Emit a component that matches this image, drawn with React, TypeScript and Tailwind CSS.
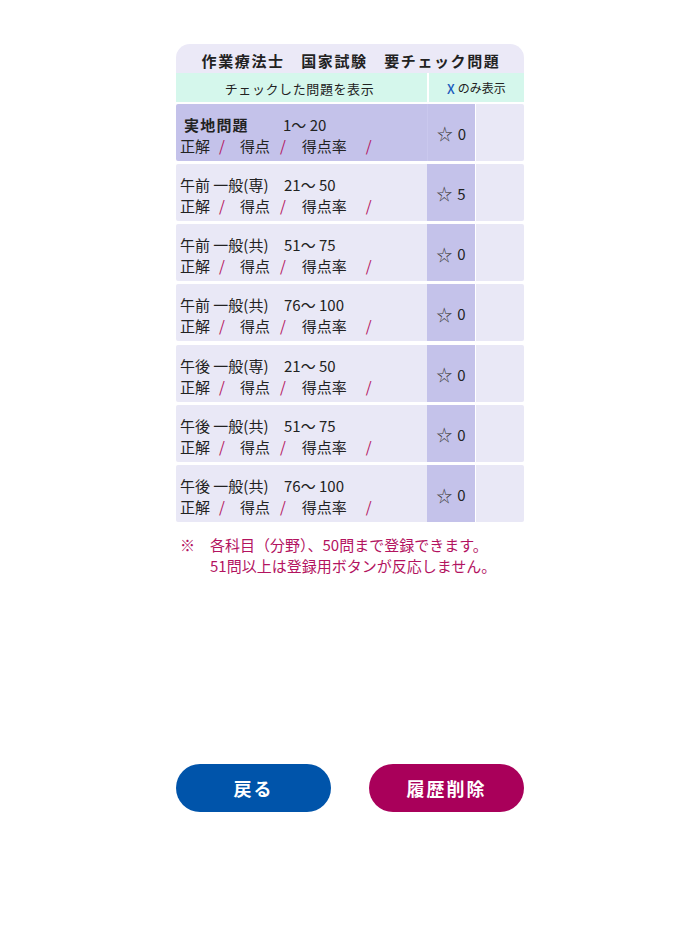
import React from "react";

const rows = [
  { a: "実地問題", b: "1〜 20", n: 0, bold: true },
  { a: "午前 一般(専)", b: "21〜 50", n: 5 },
  { a: "午前 一般(共)", b: "51〜 75", n: 0 },
  { a: "午前 一般(共)", b: "76〜 100", n: 0 },
  { a: "午後 一般(専)", b: "21〜 50", n: 0 },
  { a: "午後 一般(共)", b: "51〜 75", n: 0 },
  { a: "午後 一般(共)", b: "76〜 100", n: 0 },
];

function Slash({ ml }: { ml: string }) {
  return <span className={`${ml} text-[#b3135f]`}>/</span>;
}

export default function App() {
  return (
    <div
      className="w-[700px] h-[934px] bg-white text-[#222]"
      style={{ fontFamily: '"Noto Sans CJK JP", "Noto Sans", sans-serif' }}
    >
      <div className="w-[348px] mx-auto pt-[44px]">
        <div className="h-[29px] bg-[#ebe9f7] rounded-t-[14px] flex items-center justify-center pt-[3px] text-[15px] font-bold tracking-[1.6px] leading-none pl-[2px]">
          作業療法士　国家試験　要チェック問題
        </div>
        <div className="flex gap-[2px] h-[28.5px]">
          <div className="w-[251px] bg-[#d5f7ec] flex items-center justify-center pt-[2px] pr-[4px] text-[13px] tracking-[0.6px] leading-none">
            チェックした問題を表示
          </div>
          <div className="flex-1 bg-[#d5f7ec] flex items-center justify-center pt-[2px] text-[12px] leading-none">
            <span className="text-[#1a5cbc] text-[13px] font-medium mr-[3px]">X</span>のみ表示
          </div>
        </div>
        <div className="flex flex-col gap-[3.3px] mt-[2px]">
          {rows.map((r, i) => (
            <div key={i} className="flex h-[57px]">
              <div
                className={`w-[251px] rounded-l-[2px] pt-[10px] text-[15px] leading-[21px] ${
                  r.bold ? "bg-[#c4c2ea] pl-[8px]" : "bg-[#e9e8f6] pl-[4px]"
                }`}
              >
                <div className="flex">
                  {r.bold ? (
                    <span className="w-[99px] font-bold tracking-[1.2px]">{r.a}</span>
                  ) : (
                    <span className="w-[104px]">{r.a}</span>
                  )}
                  <span>{r.b}</span>
                </div>
                <div className={`flex ${r.bold ? "-ml-[4px]" : ""}`}>
                  <span>正解</span>
                  <Slash ml="ml-[9px]" />
                  <span className="ml-[15px]">得点</span>
                  <Slash ml="ml-[10px]" />
                  <span className="ml-[16px]">得点率</span>
                  <Slash ml="ml-[19px]" />
                </div>
              </div>
              <div
                className={`w-[48px] bg-[#c4c2ea] flex items-center justify-center pt-[2px] text-[15px] leading-none ${
                  r.bold ? "border-l border-[#cac8ee]" : ""
                }`}
              >
                <span className="text-[#444] text-[16px]">☆</span>
                <span className="ml-[5px]">{r.n}</span>
              </div>
              <div className="flex-1 ml-[1px] bg-[#e9e8f6] rounded-r-[2px]" />
            </div>
          ))}
        </div>
        <div className="mt-[12px] text-[15px] leading-[21px] text-[#b3135f] pl-[4px]">
          <div className="flex">
            <span className="w-[30px]">※</span>
            <span>各科目（分野）、50問まで登録できます。</span>
          </div>
          <div className="pl-[30px]">51問以上は登録用ボタンが反応しません。</div>
        </div>
        <div className="flex justify-between mt-[188px]">
          <button className="w-[155px] h-[48px] rounded-full bg-[#0054aa] text-white text-[18px] font-bold tracking-[2px] flex items-center justify-center pt-[1px]">
            戻る
          </button>
          <button className="w-[155px] h-[48px] rounded-full bg-[#a9005a] text-white text-[18px] font-bold tracking-[2px] flex items-center justify-center pt-[1px]">
            履歴削除
          </button>
        </div>
      </div>
    </div>
  );
}
